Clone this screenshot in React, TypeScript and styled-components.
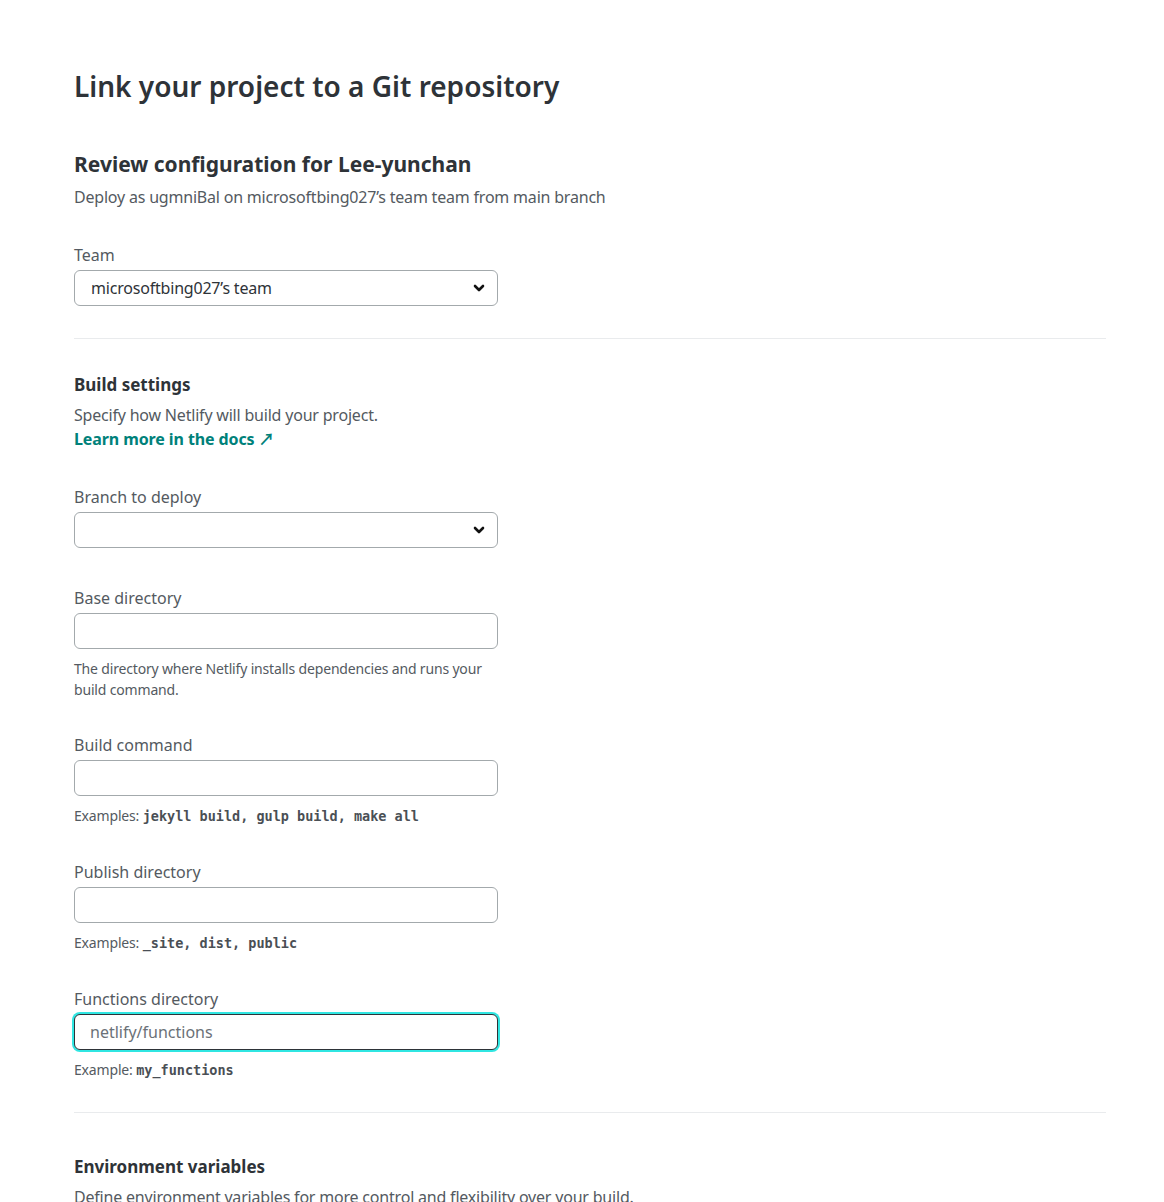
import styled, { createGlobalStyle } from 'styled-components'

const GlobalStyle = createGlobalStyle`
  html, body {
    margin: 0;
    padding: 0;
    background: #ffffff;
  }
  body {
    font-family: 'Noto Sans', 'Noto Sans CJK KR', sans-serif;
    color: #2e3338;
  }
`

interface FieldProps {
  label: string
  placeholder?: string
  focused?: boolean
  children?: React.ReactNode
}

function Field({ label, placeholder, focused, children }: FieldProps) {
  return (
    <FieldBlock>
      <Label>{label}</Label>
      <TextInput placeholder={placeholder} $focused={focused} />
      {children}
    </FieldBlock>
  )
}

function SelectField({ label, value }: { label: string; value?: string }) {
  return (
    <SelectBlock>
      <Label>{label}</Label>
      <SelectBox>
        <span>{value}</span>
        <svg width="12" height="12" viewBox="0 0 12 12">
          <path d="M2 4l4 4 4-4" fill="none" stroke="#111" strokeWidth="2.6" strokeLinecap="round" strokeLinejoin="round" />
        </svg>
      </SelectBox>
    </SelectBlock>
  )
}

export default function App() {
  return (
    <>
      <GlobalStyle />
      <Page>
        <Title>Link your project to a Git repository</Title>

        <Section>
          <Heading>Review configuration for Lee-yunchan</Heading>
          <Sub>Deploy as ugmniBal on microsoftbing027’s team team from main branch</Sub>
          <SelectField label="Team" value="microsoftbing027’s team" />
        </Section>

        <Divider $gap={27} />

        <Section>
          <SubHeading>Build settings</SubHeading>
          <Sub>Specify how Netlify will build your project.</Sub>
          <DocsLink href="#">Learn more in the docs ↗</DocsLink>

          <SelectField label="Branch to deploy" />

          <Field label="Base directory">
            <Help>The directory where Netlify installs dependencies and runs your build command.</Help>
          </Field>

          <Field label="Build command">
            <Help>
              Examples: <Code>jekyll build, gulp build, make all</Code>
            </Help>
          </Field>

          <Field label="Publish directory">
            <Help>
              Examples: <Code>_site, dist, public</Code>
            </Help>
          </Field>

          <Field label="Functions directory" placeholder="netlify/functions" focused>
            <Help>
              Example: <Code>my_functions</Code>
            </Help>
          </Field>
        </Section>

        <Divider $gap={31} />

        <Section>
          <SubHeading $gap={41}>Environment variables</SubHeading>
          <Sub>Define environment variables for more control and flexibility over your build.</Sub>
        </Section>
      </Page>
    </>
  )
}

const Page = styled.div`
  width: 1032px;
  padding: 66px 58px 0 74px;
  height: 1136px;
  overflow: hidden;
  box-sizing: content-box;
`

const Title = styled.h1`
  margin: 0 0 43px;
  font-size: 28px;
  line-height: 40px;
  font-weight: 600;
  color: #2e3338;
`

const Section = styled.section`
  display: flex;
  flex-direction: column;
`

const Heading = styled.h2`
  margin: 0 0 6px;
  font-size: 21px;
  line-height: 30px;
  font-weight: 700;
`

const SubHeading = styled.h3<{ $gap?: number }>`
  margin: ${({ $gap }) => $gap ?? 33}px 0 5px;
  font-size: 17px;
  line-height: 26px;
  font-weight: 700;
`

const Sub = styled.p`
  margin: 0;
  font-size: 16px;
  line-height: 24px;
  letter-spacing: -0.2px;
  color: #545a61;
`

const DocsLink = styled.a`
  align-self: flex-start;
  font-size: 16px;
  line-height: 24px;
  font-weight: 700;
  letter-spacing: -0.1px;
  color: #00817a;
  text-decoration: none;
`

const FieldBlock = styled.div`
  display: flex;
  flex-direction: column;
  width: 424px;
  margin-top: 33px;
`

const SelectBlock = styled(FieldBlock)`
  margin-top: 34px;
  margin-bottom: 5px;
`

const Label = styled.label`
  font-size: 16px;
  line-height: 24px;
  color: #545a61;
  margin-bottom: 3px;
`

const SelectBox = styled.div`
  height: 36px;
  box-sizing: border-box;
  border: 1px solid #a3a9ac;
  border-radius: 6px;
  display: flex;
  align-items: center;
  justify-content: space-between;
  padding: 0 12px 0 16px;
  font-size: 16px;
  letter-spacing: -0.2px;
  color: #2e3338;
`

const TextInput = styled.input<{ $focused?: boolean }>`
  height: 36px;
  box-sizing: border-box;
  border: 1px solid ${({ $focused }) => ($focused ? '#2e3338' : '#a3a9ac')};
  border-radius: 6px;
  padding: 0 15px;
  font-family: inherit;
  font-size: 16px;
  color: #2e3338;
  outline: none;
  box-shadow: ${({ $focused }) => ($focused ? '0 0 0 2px #30e6e2' : 'none')};
  &::placeholder {
    color: #6b7178;
  }
`

const Help = styled.p`
  margin: 9px 0 0;
  font-size: 14px;
  line-height: 21px;
  letter-spacing: -0.17px;
  color: #545a61;
`

const Code = styled.code`
  font-family: 'DejaVu Sans Mono', 'Liberation Mono', monospace;
  font-size: 13.5px;
  font-weight: 700;
  letter-spacing: 0;
  color: #4a4f55;
`

const Divider = styled.hr<{ $gap: number }>`
  margin: ${({ $gap }) => $gap}px 0 0;
  border: none;
  border-top: 1px solid #e9ebed;
`
